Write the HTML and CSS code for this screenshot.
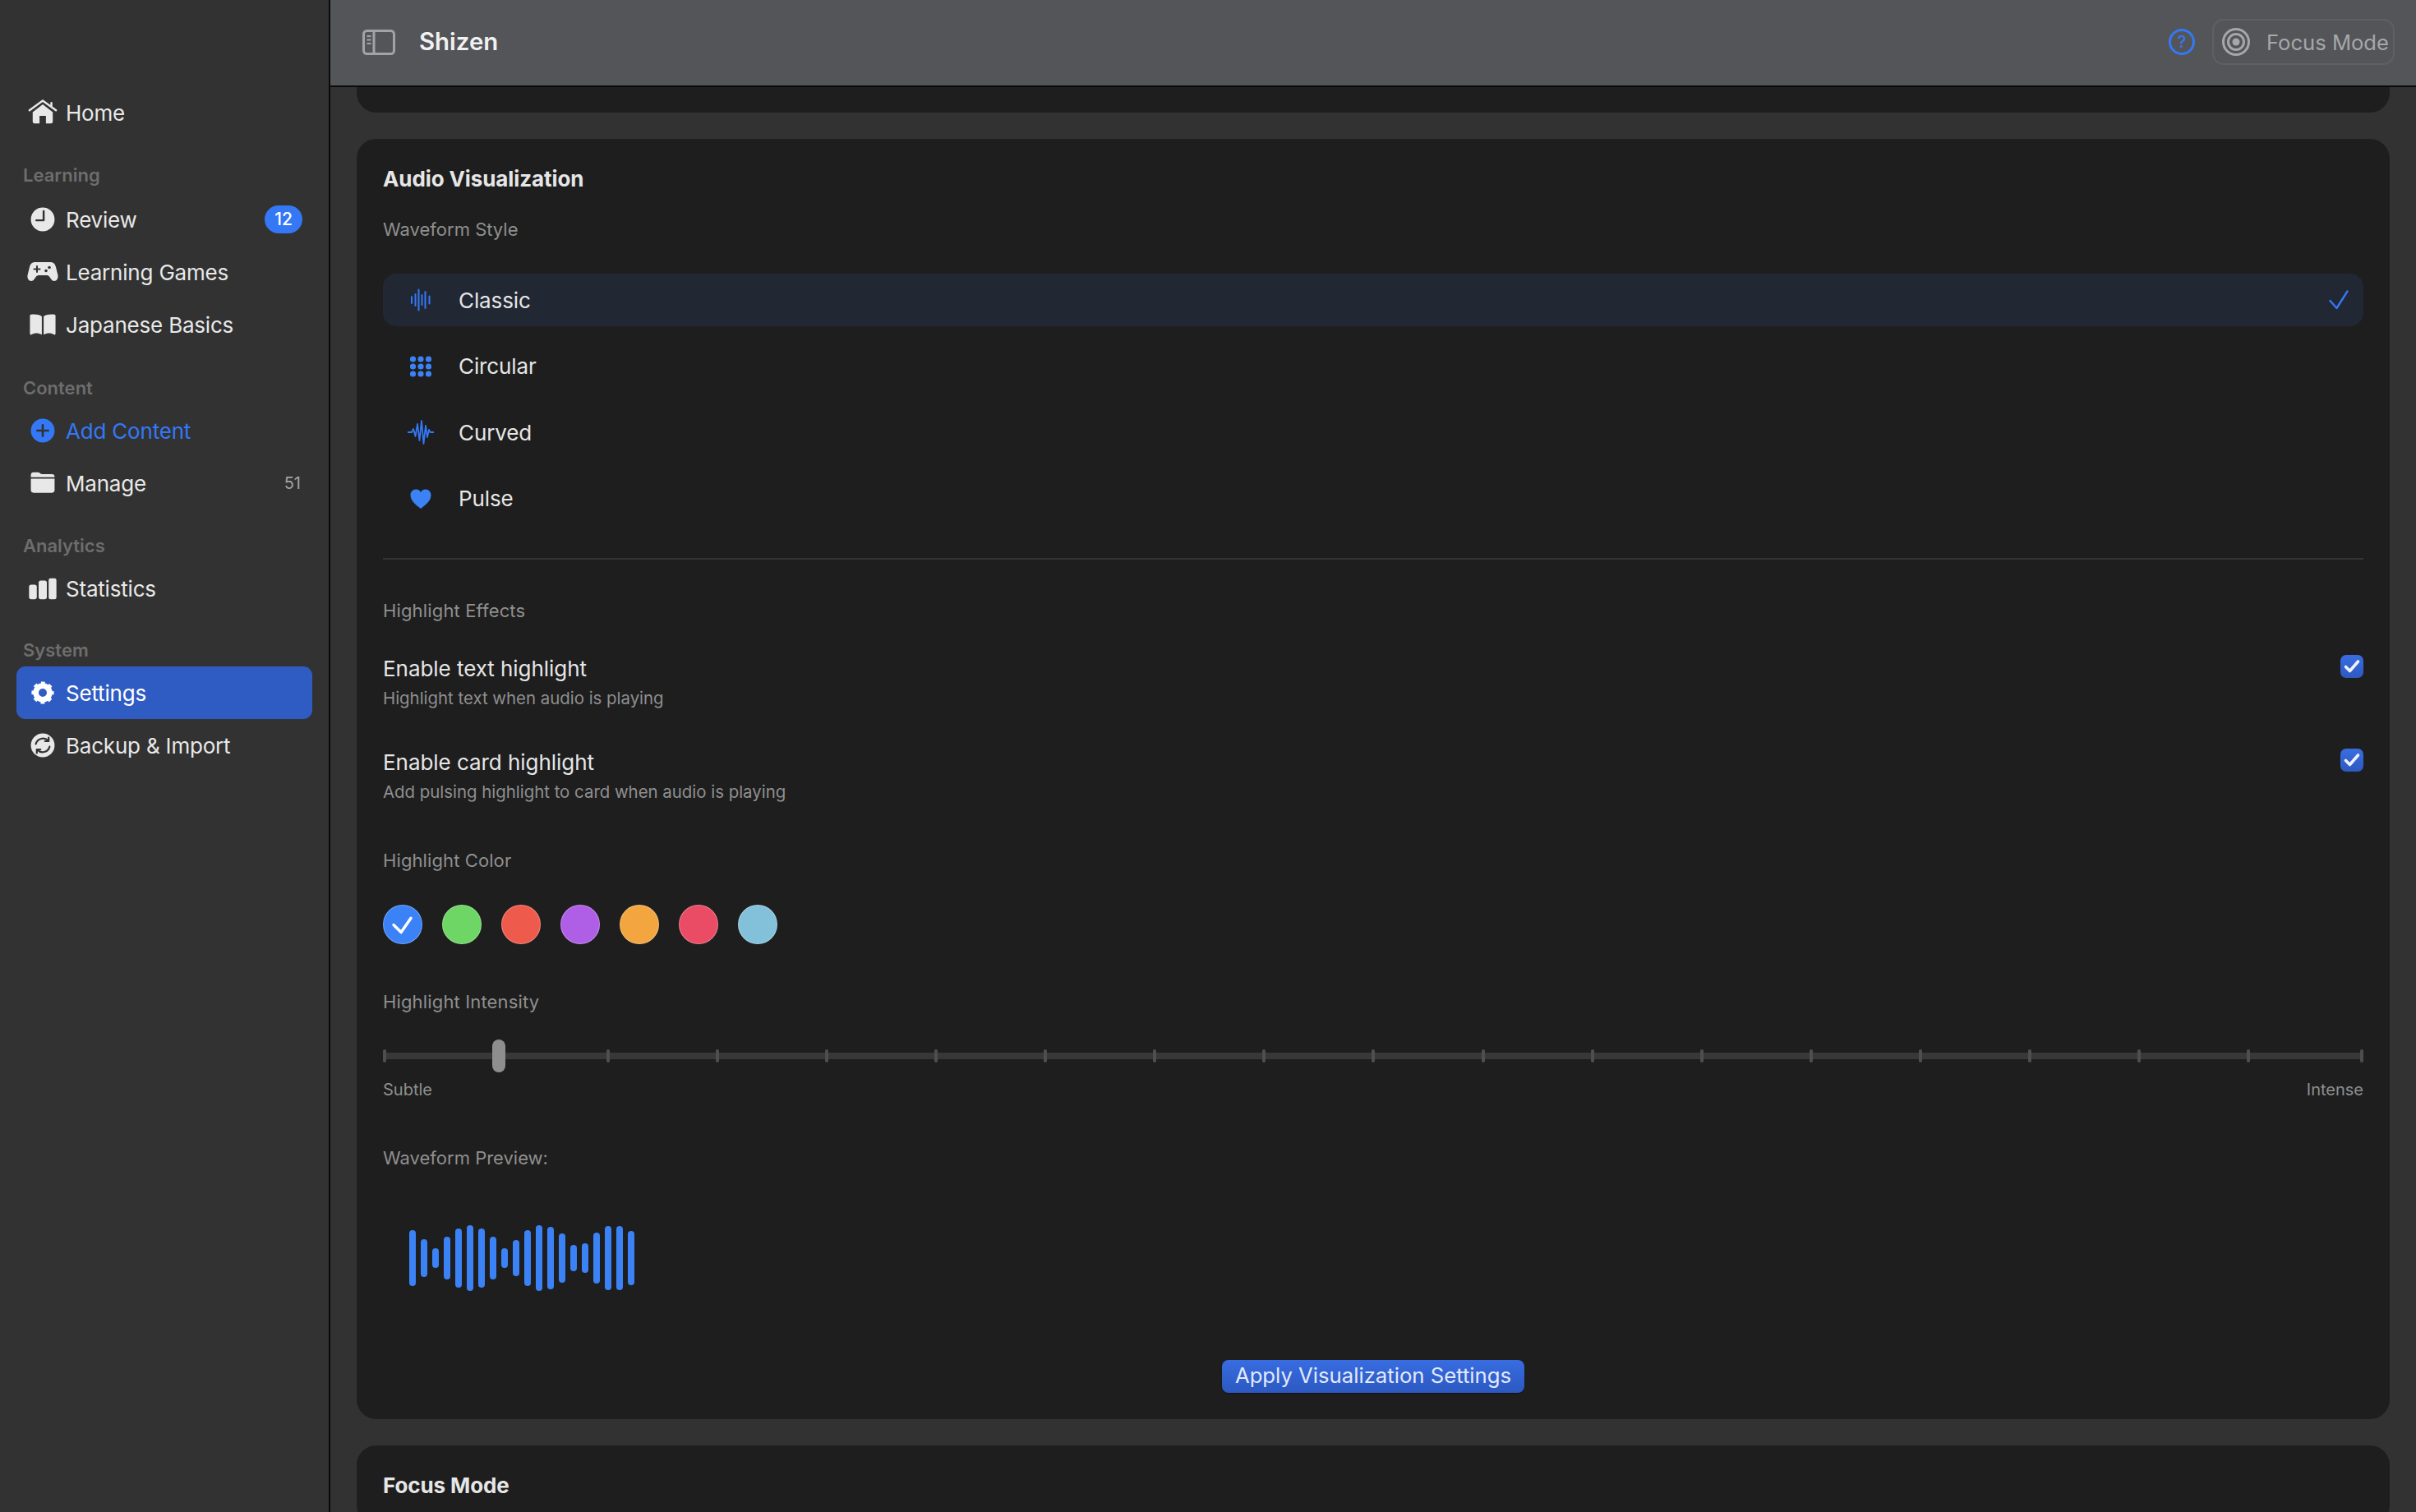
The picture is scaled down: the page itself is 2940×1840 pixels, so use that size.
FILE: index.html
```html
<!DOCTYPE html>
<html lang="en">
<head>
<meta charset="utf-8">
<title>Shizen</title>
<link rel="stylesheet" href="styles.css">
</head>
<body>
<div class="app">
  <aside class="sidebar">
    <nav class="nav-item">
      <svg class="nav-icon" viewBox="0 0 36 36"><path class="fill" fill-rule="evenodd" d="M7 17.500 18 9 29 17.500V28a2 2 0 0 1-2 2H9a2 2 0 0 1-2-2ZM14.500 21.500V30H21.500V21.500Z"/><path class="line" d="M3.500 15.500 18 5 32.500 15.500M27.500 7.500V10.500" stroke-width="2.200"/></svg>
      <span class="nav-text">Home</span>
    </nav>
    <div class="nav-label nav-label-first">Learning</div>
    <nav class="nav-item">
      <svg class="nav-icon" viewBox="0 0 36 36"><circle class="fill" cx="18" cy="18" r="13"/><path class="cut" d="M19 9V19H11" stroke-width="2.2"/></svg>
      <span class="nav-text">Review</span>
      <span class="badge">12</span>
    </nav>
    <nav class="nav-item">
      <svg class="nav-icon" viewBox="0 -7 38 40"><path class="fill" d="M10 1C6 1 4 3 3 7L.5 17C0 21 2 24 5 24 8 24 9 21 11 18.500 12 17.500 13 17 14.500 17H23.500C25 17 26 17.500 27 18.500 29 21 30 24 33 24 36 24 38 21 37.500 17L35 7C34 3 32 1 28 1Z"/><path class="cut" d="M12 6V13M8.500 9.500H15.500" stroke-width="2"/><circle class="dot" cx="27" cy="7.500" r="1.800"/><circle class="dot" cx="23" cy="11.500" r="1.800"/></svg>
      <span class="nav-text">Learning Games</span>
    </nav>
    <nav class="nav-item">
      <svg class="nav-icon" viewBox="0 0 36 36"><path class="fill" d="M17 9C14 7 9 6.500 5.500 7 4.500 7 4 7.500 4 8.500V28C4 29 5 29.500 5.500 29 9 27 13 27 17 29Z"/><path class="fill" d="M19 9C22 7 27 6.500 30.500 7 31.500 7 32 7.500 32 8.500V28C32 29 31 29.500 30.500 29 27 27 23 27 19 29Z"/></svg>
      <span class="nav-text">Japanese Basics</span>
    </nav>
    <div class="nav-label nav-label-content">Content</div>
    <nav class="nav-item nav-item-accent">
      <svg class="nav-icon" viewBox="0 0 36 36"><circle class="accent-fill" cx="18" cy="18" r="13"/><path class="cut" d="M18 12V24M12 18H24" stroke-width="2.400"/></svg>
      <span class="nav-text">Add Content</span>
    </nav>
    <nav class="nav-item">
      <svg class="nav-icon" viewBox="0 0 36 36"><path class="fill" d="M5 11.500V9a3 3 0 0 1 3-3H12.500c2 0 3 2 5 2H28a3 3 0 0 1 3 3V11.500Z"/><path class="fill" d="M5 13H31V25.500a3 3 0 0 1-3 3H8a3 3 0 0 1-3-3Z"/></svg>
      <span class="nav-text">Manage</span>
      <span class="count">51</span>
    </nav>
    <div class="nav-label">Analytics</div>
    <nav class="nav-item">
      <svg class="nav-icon" viewBox="0 0 36 36"><rect class="fill" x="3" y="14" width="8.500" height="16" rx="2.500"/><rect class="fill" x="13.500" y="9.500" width="9" height="20.500" rx="2.500"/><rect class="fill" x="24.500" y="7" width="8.500" height="23" rx="2"/></svg>
      <span class="nav-text">Statistics</span>
    </nav>
    <div class="nav-label nav-label-system">System</div>
    <nav class="nav-item nav-item-active">
      <svg class="nav-icon" viewBox="0 0 36 36"><circle class="gear-ring" cx="18" cy="18" r="7.500"/><circle class="gear-teeth" cx="18" cy="18" r="10.500"/></svg>
      <span class="nav-text">Settings</span>
    </nav>
    <nav class="nav-item">
      <svg class="nav-icon" viewBox="0 0 36 36"><circle class="fill" cx="18" cy="18" r="13"/><path class="cut" d="M10.500 16.500A8 8 0 0 1 24 13M20.500 13.500H24.500V9.500M25.500 19.500A8 8 0 0 1 12 23M15.500 22.500H11.500V26.500" stroke-width="2"/></svg>
      <span class="nav-text">Backup &amp; Import</span>
    </nav>
  </aside>

  <div class="main">
    <header class="topbar">
      <svg class="toggle-icon" viewBox="0 0 40 31"><rect x="1.500" y="1.500" width="37" height="28" rx="4"/><path d="M14 1.500V29.500"/><path class="toggle-lines" d="M5.500 8H10.500M5.500 12.500H10.500M5.500 17H10.500"/></svg>
      <h1 class="app-title">Shizen</h1>
      <svg class="help-icon" viewBox="0 0 32 32"><circle cx="16" cy="16" r="14.500"/><text x="16" y="23" text-anchor="middle">?</text></svg>
      <div class="focus-btn">
        <svg class="focus-icon" viewBox="0 0 34 34"><circle cx="17" cy="17" r="15.500"/><circle cx="17" cy="17" r="9.500"/><circle class="focus-dot" cx="17" cy="17" r="4.500"/></svg>
        <span>Focus Mode</span>
      </div>
    </header>

    <div class="content">
      <section class="card card-stub"></section>

      <section class="card">
        <h2 class="card-title">Audio Visualization</h2>
        <div class="label label-waveform">Waveform Style</div>
        <div class="options">
          <div class="option option-selected">
            <svg class="option-icon" viewBox="0 0 32 32"><path class="wave" d="M5 12V20M9.500 9V23M13.500 3.500V28.500M17.500 10V22M21.500 6V26M26.500 11.500V20.500"/></svg>
            <span>Classic</span>
            <svg class="option-check" viewBox="0 0 24 24"><path d="M1.500 13 9.500 22 22.500 1.500"/></svg>
          </div>
          <div class="option">
            <svg class="option-icon" viewBox="0 0 32 32"><g class="dots"><circle cx="6.500" cy="7" r="3.600"/><circle cx="16" cy="7" r="3.600"/><circle cx="25.500" cy="7" r="3.600"/><circle cx="6.500" cy="16" r="3.600"/><circle cx="16" cy="16" r="3.600"/><circle cx="25.500" cy="16" r="3.600"/><circle cx="6.500" cy="25" r="3.600"/><circle cx="16" cy="25" r="3.600"/><circle cx="25.500" cy="25" r="3.600"/></g></svg>
            <span>Circular</span>
          </div>
          <div class="option">
            <svg class="option-icon" viewBox="0 0 32 32"><path class="wave wave-thin" d="M0 16H5L7 12 9.500 21 12 6 14.500 26 17 2 19.500 30 22 8 24 22 26 13 27.500 16H32"/></svg>
            <span>Curved</span>
          </div>
          <div class="option">
            <svg class="option-icon" viewBox="0 0 32 32"><path class="heart" d="M16 28C11 24 3.500 19 3.500 11.500 3.500 7.500 6.500 4.500 10 4.500 12.500 4.500 15 6 16 8 17 6 19.500 4.500 22 4.500 25.500 4.500 28.500 7.500 28.500 11.500 28.500 19 21 24 16 28Z"/></svg>
            <span>Pulse</span>
          </div>
        </div>

        <div class="divider"></div>

        <div class="label label-effects">Highlight Effects</div>
        <div class="toggle-row">
          <div class="toggle-text">
            <div class="toggle-title">Enable text highlight</div>
            <div class="toggle-sub">Highlight text when audio is playing</div>
          </div>
          <span class="checkbox"><svg viewBox="0 0 28 28"><path d="M6.500 14.500 11.500 19.500 21.500 8"/></svg></span>
        </div>
        <div class="toggle-row toggle-row-next">
          <div class="toggle-text">
            <div class="toggle-title">Enable card highlight</div>
            <div class="toggle-sub">Add pulsing highlight to card when audio is playing</div>
          </div>
          <span class="checkbox"><svg viewBox="0 0 28 28"><path d="M6.500 14.500 11.500 19.500 21.500 8"/></svg></span>
        </div>

        <div class="label label-color">Highlight Color</div>
        <div class="swatches">
          <span class="swatch swatch-blue"><svg viewBox="0 0 48 48"><path d="M12.500 24.500 22 34 34.500 16"/></svg></span>
          <span class="swatch swatch-green"></span>
          <span class="swatch swatch-red"></span>
          <span class="swatch swatch-purple"></span>
          <span class="swatch swatch-orange"></span>
          <span class="swatch swatch-pink"></span>
          <span class="swatch swatch-sky"></span>
        </div>

        <div class="label label-intensity">Highlight Intensity</div>
        <div class="slider">
          <div class="slider-track"></div>
          <div class="slider-ticks">
            <i></i><i></i><i></i><i></i><i></i><i></i><i></i><i></i><i></i><i></i><i></i><i></i><i></i><i></i><i></i><i></i><i></i><i></i>
          </div>
          <div class="slider-thumb"></div>
        </div>
        <div class="slider-scale"><span>Subtle</span><span>Intense</span></div>

        <div class="label label-preview">Waveform Preview:</div>
        <div class="bars">
          <i style="height:68px"></i><i style="height:46px"></i><i style="height:24px"></i><i style="height:52px"></i><i style="height:72px"></i><i style="height:80px"></i><i style="height:72px"></i><i style="height:52px"></i><i style="height:24px"></i><i style="height:44px"></i><i style="height:68px"></i><i style="height:80px"></i><i style="height:76px"></i><i style="height:60px"></i><i style="height:32px"></i><i style="height:36px"></i><i style="height:62px"></i><i style="height:78px"></i><i style="height:78px"></i><i style="height:66px"></i>
        </div>

        <div class="actions"><button class="apply-btn">Apply Visualization Settings</button></div>
      </section>

      <section class="card">
        <h2 class="card-title">Focus Mode</h2>
      </section>
    </div>
  </div>
</div>
</body>
</html>
```

FILE: styles.css
```css
* { box-sizing: border-box; }
html, body { margin: 0; height: 100%; overflow: hidden; background: #323232; }
body { font-family: Inter, "Noto Sans", sans-serif; color: #e6e6e6; }
.app { display: grid; grid-template-columns: 402px 1fr; height: 1840px; }

.sidebar { background: #323232; border-right: 2px solid #0a0a0a; padding: 105px 20px 0; }
.nav-item { display: flex; align-items: center; height: 64px; padding-left: 12px; border-radius: 11px; color: #e8e8e8; }
.nav-text { font-size: 26px; letter-spacing: -0.2px; margin-left: 8px; padding-top: 1px; line-height: 32px; }
.nav-icon { width: 40px; height: 40px; flex: none; }
.nav-item-accent { color: #3478f6; }
.nav-item-active { background: #2f5cc3; color: #fff; }
.nav-label { display: flex; align-items: flex-end; height: 64px; padding: 0 0 7px 8px; font-size: 22px; line-height: 26px; font-weight: 600; color: #6d6d6d; }
.nav-label-first { height: 66px; padding-bottom: 9px; }
.nav-label-content { height: 65px; }
.nav-label-system { height: 63px; }
.fill { fill: #e8e8e8; }
.line { fill: none; stroke: #e8e8e8; stroke-linecap: round; stroke-linejoin: round; }
.cut { fill: none; stroke: #323232; stroke-linecap: round; stroke-linejoin: round; }
.dot { fill: #323232; }
.accent-fill { fill: #3478f6; }
.gear-ring { fill: none; stroke: #fff; stroke-width: 6; }
.gear-teeth { fill: none; stroke: #fff; stroke-width: 3.500; stroke-dasharray: 4.12 4.12; stroke-dashoffset: 2.06; }
.badge { margin-left: auto; margin-right: 12px; width: 46px; height: 34px; border-radius: 17px; background: #3478f6; color: #fff; font-size: 21px; line-height: 34px; text-align: center; font-weight: 500; }
.count { margin-left: auto; margin-right: 14px; font-size: 20px; color: #a3a3a3; }

.main { min-width: 0; display: flex; flex-direction: column; height: 1840px; }
.topbar { flex: none; height: 106px; display: flex; align-items: center; background: #545559; border-bottom: 2px solid #0a0a0a; padding: 0 26px 2px 39px; }
.toggle-icon { width: 40px; height: 31px; fill: none; stroke: #a2a3a5; stroke-width: 3; }
.toggle-lines { stroke-width: 2; }
.app-title { margin: 0 auto 0 29px; font-size: 29.4px; line-height: 36px; font-weight: 600; color: #f1f1f1; }
.help-icon { width: 32px; height: 32px; margin-right: 21px; }
.help-icon circle { fill: none; stroke: #3478f6; stroke-width: 3; }
.help-icon text { fill: #3478f6; font-family: Inter, sans-serif; font-size: 20px; font-weight: 500; }
.focus-btn { display: flex; align-items: center; width: 222px; height: 56px; border: 2px solid #5f6064; border-radius: 14px; padding-left: 10px; font-size: 25.6px; color: #a6a7a9; white-space: nowrap; }
.focus-icon { width: 34px; height: 34px; margin-right: 20px; fill: none; stroke: #a6a7a9; stroke-width: 3; }
.focus-dot { fill: #a6a7a9; stroke: none; }

.content { flex: 1; min-height: 0; overflow: hidden; display: flex; flex-direction: column; gap: 32px; padding: 0 32px; }
.card { flex: none; background: #1e1e1e; border-radius: 24px; padding: 32px; }
.card-stub { height: 31px; padding: 0; border-radius: 0 0 24px 24px; }
.card-title { margin: 1px 0 0; font-size: 26px; line-height: 32px; font-weight: 700; color: #e6e6e6; letter-spacing: -0.1px; }

.label { font-size: 22px; line-height: 28px; color: #8f8f8f; }
.label-waveform { margin-top: 31px; }
.label-effects { margin-top: 48px; letter-spacing: .15px; }
.label-color { margin-top: 55px; letter-spacing: .1px; }
.label-intensity { margin-top: 56px; letter-spacing: .15px; }
.label-preview { margin-top: 55px; }

.options { display: flex; flex-direction: column; gap: 16.67px; margin-top: 40px; }
.option { display: flex; align-items: center; height: 64px; padding: 0 18px 0 30px; border-radius: 16px; font-size: 26px; letter-spacing: -0.1px; color: #e6e6e6; }
.option-selected { background: #212733; }
.option-icon { width: 32px; height: 32px; margin-right: 30px; flex: none; }
.wave { fill: none; stroke: #3478f6; stroke-width: 2; stroke-linecap: round; stroke-linejoin: round; }
.wave-thin { stroke-width: 1.800; }
.dots circle, .heart { fill: #3b82f6; }
.option-check { width: 24px; height: 24px; margin-left: auto; fill: none; stroke: #3478f6; stroke-width: 2.400; stroke-linecap: round; stroke-linejoin: round; }

.divider { height: 2px; margin-top: 40px; background: #343434; }

.toggle-row { display: flex; justify-content: space-between; align-items: flex-start; margin-top: 40px; }
.toggle-row-next { margin-top: 47px; }
.toggle-text { padding-top: 1px; }
.toggle-title { font-size: 26px; line-height: 32px; letter-spacing: -0.05px; color: #e6e6e6; }
.toggle-sub { margin-top: 6px; font-size: 20.4px; line-height: 28px; color: #8f8f8f; }
.checkbox { display: block; width: 28px; height: 28px; border-radius: 7px; background: linear-gradient(#3a6de0, #2d59c2); }
.checkbox svg { display: block; width: 28px; height: 28px; fill: none; stroke: #eef2fd; stroke-width: 3.600; stroke-linecap: round; stroke-linejoin: round; }

.swatches { display: flex; gap: 24px; margin-top: 40px; }
.swatch { width: 48px; height: 48px; border-radius: 50%; border: 1px solid rgba(255, 255, 255, .28); }
.swatch svg { display: block; width: 46px; height: 46px; fill: none; stroke: #fff; stroke-width: 3.600; stroke-linecap: round; stroke-linejoin: round; }
.swatch-blue { background: #3b82f6; }
.swatch-green { background: #6dd664; }
.swatch-red { background: #ee5a4b; }
.swatch-purple { background: #af5fe6; }
.swatch-orange { background: #f3a640; }
.swatch-pink { background: #ea4c66; }
.swatch-sky { background: #83c1da; }

.slider { position: relative; height: 40px; margin-top: 32px; }
.slider-track { position: absolute; left: 0; right: 0; top: 16px; height: 8px; background: #383838; }
.slider-ticks { position: absolute; left: 0; right: 0; top: 12px; display: grid; grid-template-columns: 272px repeat(15, 133.07px) 138px 4px; }
.slider-ticks i { display: block; width: 4px; height: 16px; border-radius: 2px; background: #4e4e4e; }
.slider-thumb { position: absolute; left: 133px; top: 0; width: 16px; height: 40px; border-radius: 8px; background: #8e8e8e; }
.slider-scale { display: flex; justify-content: space-between; margin-top: 7px; font-size: 20px; line-height: 28px; color: #8f8f8f; }

.bars { display: flex; align-items: center; gap: 6px; height: 80px; margin: 68px 0 0 32px; }
.bars i { display: block; width: 8px; border-radius: 4px; background: #3b82f6; }

.actions { display: flex; justify-content: center; margin-top: 84px; }
.apply-btn { width: 368px; height: 40px; padding: 0 0 2px; border: 0; border-radius: 8px; background: linear-gradient(#386ce1, #2c58c0); box-shadow: 0 1px 2px rgba(0, 0, 0, .4); font-family: inherit; font-size: 25.7px; line-height: 36px; color: #e2e9fb; white-space: nowrap; }
```
